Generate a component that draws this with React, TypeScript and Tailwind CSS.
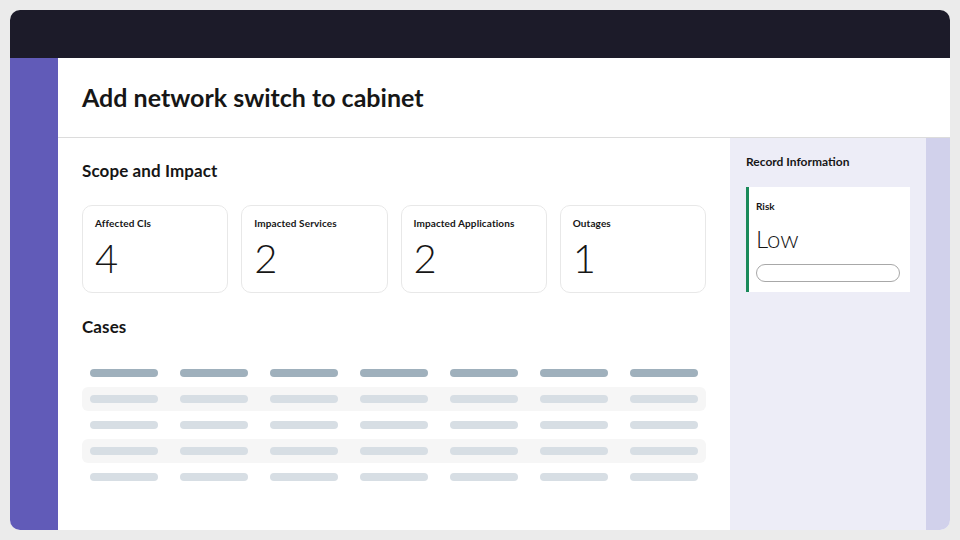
const cards = [
  { label: "Affected CIs", value: "4" },
  { label: "Impacted Services", value: "2" },
  { label: "Impacted Applications", value: "2" },
  { label: "Outages", value: "1" },
];

const cols = [0, 1, 2, 3, 4, 5, 6];
const rows = [0, 1, 2, 3];

const App = () => {
  return (
    <div
      className="w-[960px] h-[540px] bg-[#ebebeb] p-[10px] text-[#161616]"
      style={{ fontFamily: "Lato, 'Open Sans', sans-serif" }}
    >
      <div className="h-full rounded-[10px] overflow-hidden flex flex-col bg-white">
        {/* top bar */}
        <div className="h-[48px] bg-[#1c1b29] shrink-0" />

        <div className="flex-1 flex min-h-0">
          {/* left rail */}
          <div className="w-[48px] bg-[#615bb8] shrink-0" />

          <div className="flex-1 flex flex-col min-w-0">
            {/* header */}
            <div className="h-[80px] shrink-0 border-b border-[#dcdcdc] flex items-center px-6">
              <h1 className="text-[25px] font-bold leading-none">
                Add network switch to cabinet
              </h1>
            </div>

            <div className="flex-1 flex min-h-0">
              {/* main */}
              <div className="flex-1 px-6 pt-[21px]">
                <h2 className="text-[17px] leading-6 font-bold tracking-[0.1px]">Scope and Impact</h2>

                <div className="mt-[22px] grid grid-cols-4 gap-[13px]">
                  {cards.map((card) => (
                    <div
                      key={card.label}
                      className="h-[88px] rounded-[10px] border border-[#e8e8e8] px-3 pt-[10px]"
                    >
                      <div className="text-[10px] leading-[14px] font-bold tracking-[0.1px]">
                        {card.label}
                      </div>
                      <div className="mt-[8px] text-[40px] leading-none font-light">
                        {card.value}
                      </div>
                    </div>
                  ))}
                </div>

                <h2 className="mt-[22px] text-[17px] leading-6 font-bold tracking-[0.1px]">Cases</h2>

                {/* table skeleton */}
                <div className="mt-[22px] flex flex-col gap-[2px]">
                  <div className="h-6 px-2 grid grid-cols-7 gap-[22px] items-center">
                    {cols.map((c) => (
                      <div key={c} className="h-2 rounded-full bg-[#9fb0bc]" />
                    ))}
                  </div>
                  {rows.map((r) => (
                    <div
                      key={r}
                      className={`h-6 px-2 grid grid-cols-7 gap-[22px] items-center rounded-md ${
                        r % 2 === 0 ? "bg-[#f6f6f6]" : ""
                      }`}
                    >
                      {cols.map((c) => (
                        <div key={c} className="h-2 rounded-full bg-[#d7dee4]" />
                      ))}
                    </div>
                  ))}
                </div>
              </div>

              {/* record info panel */}
              <div className="w-[196px] shrink-0 bg-[#ededf7] px-4 pt-[16px]">
                <div className="text-[12px] leading-4 font-bold">Record Information</div>
                <div className="mt-[17px] bg-white border-l-[3px] border-[#1a8a5a] h-[105px] pl-[7px] pr-[10px] pt-[12px]">
                  <div className="text-[10px] leading-[14px] font-bold">Risk</div>
                  <div className="mt-[14px] text-[24px] leading-none font-light">Low</div>
                  <div className="mt-[13px] h-[18px] rounded-full border border-[#a8a8a8]" />
                </div>
              </div>

              <div className="w-[24px] shrink-0 bg-[#d1d1eb]" />
            </div>
          </div>
        </div>
      </div>
    </div>
  );
};

export default App;
